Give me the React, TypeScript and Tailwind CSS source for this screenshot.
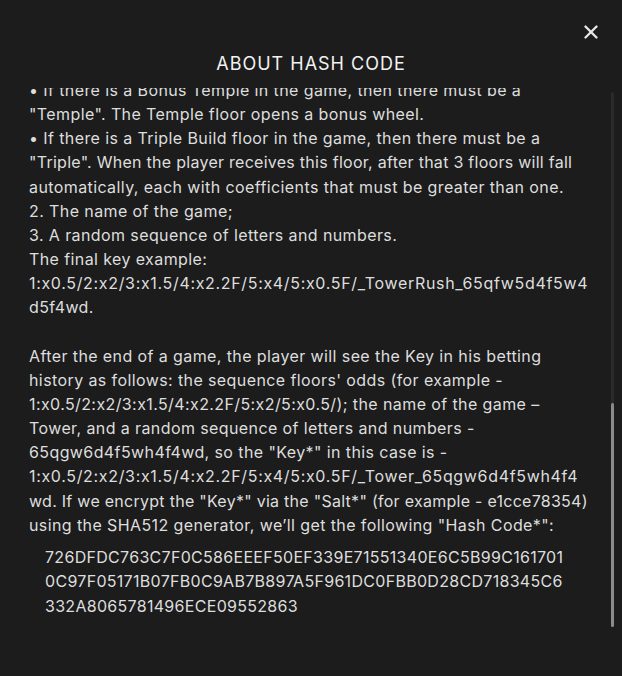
import { X } from 'lucide-react';

const hash =
  '726DFDC763C7F0C586EEEF50EF339E71551340E6C5B99C1617010C97F05171B07FB0C9AB7B897A5F961DC0FBB0D28CD718345C6332A8065781496ECE09552863';
const hashLines = [hash.slice(0, 52), hash.slice(52, 103), hash.slice(103)];

type Line = { text: string; code?: boolean; tight?: boolean };

// Lines are broken where the original layout breaks them.
const rules: Line[][] = [
  [{ text: '• If there is a Bonus Temple in the game, then there must be a' }, { text: '"Temple". The Temple floor opens a bonus wheel.' }],
  [
    { text: '• If there is a Triple Build floor in the game, then there must be a' },
    { text: '"Triple". When the player receives this floor, after that 3 floors will fall', tight: true },
    { text: 'automatically, each with coefficients that must be greater than one.' },
  ],
  [{ text: '2. The name of the game;' }],
  [{ text: '3. A random sequence of letters and numbers.' }],
  [{ text: 'The final key example:' }],
  [{ text: '1:x0.5/2:x2/3:x1.5/4:x2.2F/5:x4/5:x0.5F/_TowerRush_65qfw5d4f5w4', code: true }, { text: 'd5f4wd.' }],
];

const after: Line[] = [
  { text: 'After the end of a game, the player will see the Key in his betting' },
  { text: "history as follows: the sequence floors' odds (for example -" },
  { text: '1:x0.5/2:x2/3:x1.5/4:x2.2F/5:x2/5:x0.5/); the name of the game –' },
  { text: 'Tower, and a random sequence of letters and numbers -' },
  { text: '65qgw6d4f5wh4f4wd, so the "Key*" in this case is -' },
  { text: '1:x0.5/2:x2/3:x1.5/4:x2.2F/5:x4/5:x0.5F/_Tower_65qgw6d4f5wh4f4', code: true },
  { text: 'wd. If we encrypt the "Key*" via the "Salt*" (for example - e1cce78354)', tight: true },
  { text: 'using the SHA512 generator, we\u2019ll get the following "Hash Code*":' },
];

function Lines({ lines }: { lines: Line[] }) {
  return (
    <p>
      {lines.map((l, i) => (
        <span
          key={i}
          className={
            'block whitespace-nowrap ' +
            (l.code ? 'tracking-[0.67px]' : l.tight ? 'tracking-[0.27px]' : 'tracking-[0.4px]')
          }
        >
          {l.text}
        </span>
      ))}
    </p>
  );
}

export default function App() {
  return (
    <div
      className="w-[622px] h-[676px] bg-[#1c1c1c] text-[#dedede] overflow-hidden flex flex-col"
      style={{ fontFamily: 'Inter, "Noto Sans", sans-serif' }}
    >
      {/* Header */}
      <div className="relative h-[88px] shrink-0 flex justify-center">
        <h2 className="mt-[53px] text-[18px] leading-[22px] tracking-[1px] text-[#f2f2f2] font-normal">
          ABOUT HASH CODE
        </h2>
        <button className="absolute top-[21px] right-[20px] text-[#e6e6e6]">
          <X size={22} strokeWidth={2.6} />
        </button>
      </div>

      {/* Scroll area */}
      <div className="relative h-[540px] shrink-0 overflow-hidden">
        <div className="-mt-[10px] pl-[29px] pr-[32px] text-[16px] leading-[24.15px]">
          {rules.map((r, i) => (
            <Lines key={i} lines={r} />
          ))}
          <div className="mt-[24px]">
            <Lines lines={after} />
          </div>
          <div className="mt-[8px] pl-[16px] leading-[24.5px] tracking-[0.3px]">
            {hashLines.map((line) => (
              <div key={line}>{line}</div>
            ))}
          </div>
        </div>

        {/* Scrollbar */}
        <div className="absolute right-[8px] top-[4px] bottom-[1px] w-[3px] bg-[#2a2a2a] rounded-full">
          <div className="absolute left-0 right-0 top-[311px] bottom-0 bg-[#8a8a8a] rounded-full" />
        </div>
      </div>
    </div>
  );
}
